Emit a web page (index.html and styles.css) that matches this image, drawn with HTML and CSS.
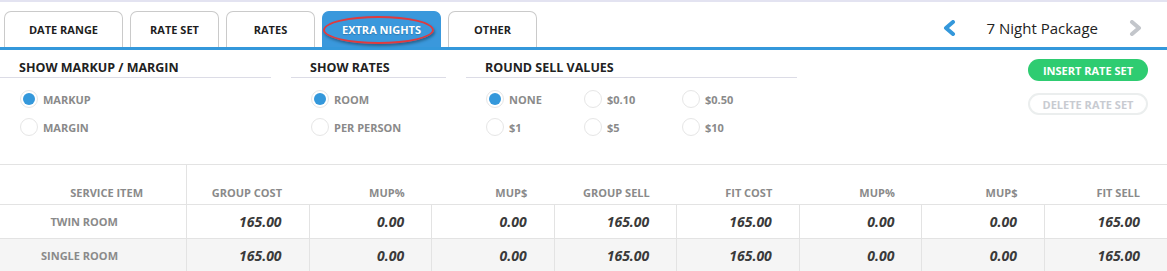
FILE: index.html
```html
<!DOCTYPE html>
<html lang="en">
<head>
    <meta charset="UTF-8">
    <title>Rate Sets - Extra Nights</title>
    <link rel="stylesheet" href="styles.css">
</head>
<body>

    <div class="topbar">
        <div class="tabs">
            <div class="tab tab-wide">DATE RANGE</div>
            <div class="tab">RATE SET</div>
            <div class="tab">RATES</div>
            <div class="tab tab-wide active">EXTRA NIGHTS<span class="mark"></span></div>
            <div class="tab">OTHER</div>
        </div>
        <div class="pager">
            <svg class="chev chev-on" width="14" height="16" viewBox="0 0 14 16"><path d="M11 2 L4 8 L11 14"/></svg>
            <span class="pager-title">7 Night Package</span>
            <svg class="chev chev-off" width="14" height="16" viewBox="0 0 14 16"><path d="M3 2 L10 8 L3 14"/></svg>
        </div>
    </div>

    <div class="options">
        <div class="group group-markup">
            <h4>SHOW MARKUP / MARGIN</h4>
            <div class="radios">
                <label class="radio"><span class="dot checked"></span>MARKUP</label>
                <label class="radio"><span class="dot"></span>MARGIN</label>
            </div>
        </div>
        <div class="group group-rates">
            <h4>SHOW RATES</h4>
            <div class="radios">
                <label class="radio"><span class="dot checked"></span>ROOM</label>
                <label class="radio"><span class="dot"></span>PER PERSON</label>
            </div>
        </div>
        <div class="group group-round">
            <h4>ROUND SELL VALUES</h4>
            <div class="radios radios-grid">
                <label class="radio"><span class="dot checked"></span>NONE</label>
                <label class="radio"><span class="dot"></span>$0.10</label>
                <label class="radio"><span class="dot"></span>$0.50</label>
                <label class="radio"><span class="dot"></span>$1</label>
                <label class="radio"><span class="dot"></span>$5</label>
                <label class="radio"><span class="dot"></span>$10</label>
            </div>
        </div>
        <div class="actions">
            <button class="btn btn-insert">INSERT RATE SET</button>
            <button class="btn btn-delete">DELETE RATE SET</button>
        </div>
    </div>

    <table class="rates">
        <thead>
            <tr>
                <th class="item">SERVICE ITEM</th>
                <th>GROUP COST</th>
                <th>MUP%</th>
                <th>MUP$</th>
                <th>GROUP SELL</th>
                <th>FIT COST</th>
                <th>MUP%</th>
                <th>MUP$</th>
                <th>FIT SELL</th>
            </tr>
        </thead>
        <tbody>
            <tr>
                <td class="item">TWIN ROOM</td>
                <td>165.00</td>
                <td>0.00</td>
                <td>0.00</td>
                <td>165.00</td>
                <td>165.00</td>
                <td>0.00</td>
                <td>0.00</td>
                <td>165.00</td>
            </tr>
            <tr class="alt">
                <td class="item">SINGLE ROOM</td>
                <td>165.00</td>
                <td>0.00</td>
                <td>0.00</td>
                <td>165.00</td>
                <td>165.00</td>
                <td>0.00</td>
                <td>0.00</td>
                <td>165.00</td>
            </tr>
        </tbody>
    </table>

</body>
</html>
```

FILE: styles.css
```css
body {
    margin: 0;
    font-family: 'Open Sans', 'Liberation Sans', sans-serif;
    background: #fff;
    color: #222;
    border-top: 2px solid #e3e3f1;
}

/* tabs + package pager */
.topbar {
    display: flex;
    justify-content: space-between;
    align-items: flex-end;
    padding: 9px 0 0 4px;
    border-bottom: 3px solid #3498db;
}
.tabs {
    display: flex;
    gap: 7px;
}
.tab {
    position: relative;
    width: 87px;
    height: 35px;
    display: flex;
    align-items: center;
    justify-content: center;
    border: 1px solid #cacaca;
    border-bottom: none;
    border-radius: 7px 7px 0 0;
    font-size: 11px;
    font-weight: 700;
    color: #1e1e1e;
}
.tab-wide {
    width: 117px;
}
.tab.active {
    background: #3a98dc;
    border-color: #3a98dc;
    color: #fff;
    text-shadow: 0 1px 1px rgba(0,0,0,0.2);
}
.mark {
    position: absolute;
    left: 0;
    top: 4px;
    width: 107px;
    height: 24px;
    border: 2px solid #e03a3e;
    border-radius: 50%;
    box-shadow: 1px 2px 3px rgba(0,0,0,0.35);
}
.pager {
    align-self: center;
    display: flex;
    align-items: center;
    gap: 31px;
    margin-right: 24px;
    margin-bottom: 2px;
}
.pager-title {
    font-size: 15px;
    color: #222;
}
.chev path {
    fill: none;
    stroke-width: 4;
    stroke-linecap: round;
    stroke-linejoin: round;
}
.chev-on path { stroke: #3498db; }
.chev-off path { stroke: #c3c6cb; }

/* options row */
.options {
    display: flex;
    align-items: flex-start;
    padding: 9px 0 28px;
}
.group {
    margin-right: 20px;
}
.group-markup { width: 271px; }
.group-rates { width: 155px; }
.group-round { width: 331px; }
.group h4 {
    margin: 0;
    padding-left: 19px;
    font-size: 12.5px;
    line-height: 18px;
    font-weight: 700;
    color: #222;
    border-bottom: 1px solid #dcdce6;
}
.radios {
    display: flex;
    flex-direction: column;
    gap: 10px;
    padding: 12px 0 0 20px;
}
.radios-grid {
    display: grid;
    grid-template-columns: 98px 98px 98px;
    column-gap: 0;
    row-gap: 10px;
}
.radio {
    display: flex;
    align-items: center;
    gap: 5px;
    height: 18px;
    font-size: 11px;
    font-weight: 700;
    color: #8a8a8a;
}
.dot {
    box-sizing: border-box;
    width: 18px;
    height: 18px;
    border: 1px solid #e6e6e6;
    border-radius: 50%;
    display: flex;
    align-items: center;
    justify-content: center;
}
.dot.checked::after {
    content: "";
    width: 12px;
    height: 12px;
    border-radius: 50%;
    background: #3498db;
}
.actions {
    margin-left: auto;
    margin-right: 19px;
    display: flex;
    flex-direction: column;
    gap: 12px;
}
.btn {
    width: 120px;
    height: 22px;
    border-radius: 11px;
    font-family: 'Open Sans', 'Liberation Sans', sans-serif;
    font-size: 11px;
    font-weight: 700;
    padding: 0;
}
.btn-insert {
    background: #2ecc71;
    border: none;
    color: #fff;
}
.btn-delete {
    background: #fff;
    border: 2px solid #ebeeee;
    color: #c8cbd1;
}

/* rates table */
.rates {
    width: 100%;
    border-collapse: collapse;
    table-layout: fixed;
    border-top: 1px solid #e3e3e3;
}
.rates th {
    height: 35px;
    padding: 0 27px 4px 0;
    text-align: right;
    vertical-align: bottom;
    font-size: 11px;
    line-height: 15px;
    font-weight: 700;
    color: #8a8a8a;
    border-bottom: 1px solid #e3e3e3;
}
.rates th.item {
    width: 143px;
    padding-right: 43px;
    border-right: 1px solid #e3e3e3;
}
.rates td {
    height: 33px;
    padding: 0 27px 0 0;
    text-align: right;
    font-size: 14px;
    font-weight: 700;
    font-style: italic;
    color: #3a3a3a;
    border-right: 1px solid #e3e3e3;
    border-bottom: 1px solid #e3e3e3;
}
.rates td:last-child {
    border-right: none;
}
.rates td.item {
    padding-right: 68px;
    font-size: 11px;
    font-style: normal;
    color: #8a8a8a;
}
.rates tr.alt td {
    background: #f5f5f5;
}
```
